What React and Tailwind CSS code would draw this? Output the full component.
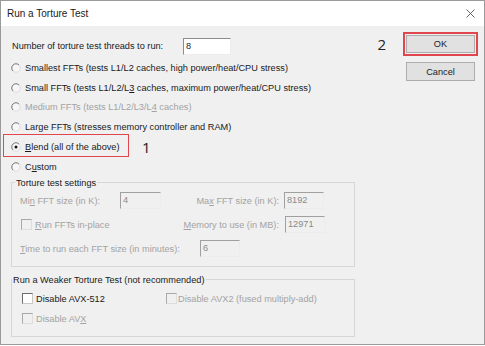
import React from "react";

// classic win32 radio, sunken look on the upper-left arc
function Radio({ checked }) {
  return (
    <svg width="10" height="10" viewBox="0 0 10 10" className="shrink-0">
      <circle cx="5" cy="5" r="4.2" fill="#f7f7f7" stroke="#dcdcdc" strokeWidth="1" />
      <path d="M8 2 A4.2 4.2 0 0 0 2 8" fill="none" stroke="#7d7d7d" strokeWidth="1" />
      {checked && <circle cx="5" cy="5" r="1.5" fill="#111" />}
    </svg>
  );
}

function Check({ disabled }) {
  return (
    <span
      className={
        disabled
          ? "block shrink-0 w-[11px] h-[11px] border border-t-[#a8a8a8] border-l-[#a8a8a8] border-b-[#dedede] border-r-[#dedede] bg-[#f0f0f0]"
          : "block shrink-0 w-[11px] h-[11px] border border-t-[#6e6e6e] border-l-[#6e6e6e] border-b-[#c8c8c8] border-r-[#c8c8c8] bg-white"
      }
    />
  );
}

function Field({ value, disabled, className }) {
  return (
    <div
      className={
        (disabled
          ? "bg-[#f0f0f0] text-[#8a8a8a] border-t-[#a0a0a0] border-l-[#a0a0a0] "
          : "bg-white text-[#222] border-t-[#8c8c8c] border-l-[#8c8c8c] ") +
        "h-[17px] border border-b-[#ececec] border-r-[#ececec] pl-[2px] leading-[14px] " +
        className
      }
    >
      {value}
    </div>
  );
}

function RadioRow({ children, checked, disabled }) {
  return (
    <div className="flex items-center h-[19.8px] gap-[4px]">
      <Radio checked={checked} />
      <span className={disabled ? "text-[#a3a3a3]" : "text-[#1a1a1a]"}>{children}</span>
    </div>
  );
}

export default function App() {
  return (
    <div className="w-[485px] h-[346px] bg-white font-['Liberation_Sans',Arial,sans-serif]">
      <div className="w-[485px] h-[345px] border border-[#9a9a9a] flex flex-col">
        {/* title bar */}
        <div className="h-[25px] bg-white flex items-center justify-between pl-[6px] pr-[9px]">
          <span className="text-[10px] text-[#1a1a1a]">Run a Torture Test</span>
          <svg width="9" height="9" viewBox="0 0 9 9">
            <path d="M0.5 0.5 L8.5 8.5 M8.5 0.5 L0.5 8.5" stroke="#555" strokeWidth="0.9" />
          </svg>
        </div>

        <div className="flex-1 bg-[#f0f0f0] flex text-[9.2px] leading-[12px] text-[#1a1a1a]">
          {/* left column */}
          <div className="w-[355px] pl-[10px] pt-[10px]">
            <div className="flex items-center h-[20px] pl-[1px]">
              <span className="w-[171px]">Number of torture test threads to run:</span>
              <Field value="8" className="w-[48px]" />
            </div>

            <div className="mt-[2px]">
              <RadioRow>Smallest FFTs (tests L1/L2 caches, high power/heat/CPU stress)</RadioRow>
              <RadioRow>
                Small FFTs (tests L1/L2/L<span className="underline">3</span> caches, maximum power/heat/CPU stress)
              </RadioRow>
              <RadioRow disabled>
                Medium FFTs (tests L1/L2/L3/L<span className="underline">4</span> caches)
              </RadioRow>
              <RadioRow>Large FFTs (stresses memory controller and RAM)</RadioRow>
              <div className="relative">
                <RadioRow checked>
                  <span className="underline">B</span>lend (all of the above)
                </RadioRow>
                <div className="absolute left-[-8px] top-[-3px] w-[126px] h-[23px] border-[1.5px] border-[#e0464e]" />
                <span className="absolute left-[131px] top-[0px] font-['Open_Sans',sans-serif] text-[15px] leading-[20px] text-[#222]">
                  1
                </span>
              </div>
              <RadioRow>
                C<span className="underline">u</span>stom
              </RadioRow>
            </div>

            {/* torture test settings */}
            <fieldset className="w-[344px] h-[90px] border border-[#d6d6d6]">
              <legend className="ml-[3px] px-[1px] leading-[12px]">Torture test settings</legend>
              <div className="pl-[8px] text-[#a3a3a3]">
                <div className="flex items-center h-[24px]">
                  <div className="w-[259px] flex items-center">
                    <span className="w-[100px]">
                      Mi<span className="underline">n</span> FFT size (in K):
                    </span>
                    <Field value="4" disabled className="w-[41px]" />
                    <span className="flex-1 text-right">
                      Ma<span className="underline">x</span> FFT size (in K):
                    </span>
                  </div>
                  <Field value="8192" disabled className="ml-[5px] w-[40px]" />
                </div>
                <div className="flex items-center h-[24px]">
                  <div className="w-[259px] flex items-center">
                    <span className="ml-[1px]">
                      <Check disabled />
                    </span>
                    <span className="ml-[3px]">
                      <span className="underline">R</span>un FFTs in-place
                    </span>
                    <span className="flex-1 text-right">
                      <span className="underline">M</span>emory to use (in MB):
                    </span>
                  </div>
                  <Field value="12971" disabled className="ml-[6px] w-[40px]" />
                </div>
                <div className="flex items-center h-[24px]">
                  <span className="w-[180px]">
                    <span className="underline">T</span>ime to run each FFT size (in minutes):
                  </span>
                  <Field value="6" disabled className="w-[40px]" />
                </div>
              </div>
            </fieldset>

            {/* weaker test */}
            <fieldset className="mt-[7px] w-[344px] h-[63px] border border-[#d6d6d6]">
              <legend className="px-[1px] leading-[12px]">Run a Weaker Torture Test (not recommended)</legend>
              <div className="pl-[10px] pt-[3px]">
                <div className="flex items-center h-[20px]">
                  <div className="w-[144px] flex items-center gap-[3px]">
                    <Check />
                    <span className="text-[#1a1a1a]">Disable AVX-512</span>
                  </div>
                  <div className="flex items-center gap-[1px] text-[#a3a3a3]">
                    <Check disabled />
                    <span>Disable AVX2 (fused multiply-add)</span>
                  </div>
                </div>
                <div className="flex items-center h-[20px] gap-[3px] text-[#a3a3a3]">
                  <Check disabled />
                  <span>
                    Disable AV<span className="underline">X</span>
                  </span>
                </div>
              </div>
            </fieldset>
          </div>

          {/* buttons */}
          <div className="flex-1 flex flex-col items-end pr-[6px] pt-[6px]">
            <div className="flex items-center gap-[17px]">
              <span className="font-['Open_Sans',sans-serif] text-[15px] leading-[20px] text-[#222]">2</span>
              <div className="border-2 border-[#e0464e] p-[1px]">
                <button className="w-[69px] h-[18px] bg-[#e1e1e1] border border-[#adadad] text-[9.2px] text-[#1a1a1a]">
                  OK
                </button>
              </div>
            </div>
            <button className="mt-[6px] mr-[3px] w-[69px] h-[19px] bg-[#e1e1e1] border border-[#adadad] text-[9.2px] text-[#1a1a1a]">
              Cancel
            </button>
          </div>
        </div>
      </div>
    </div>
  );
}
